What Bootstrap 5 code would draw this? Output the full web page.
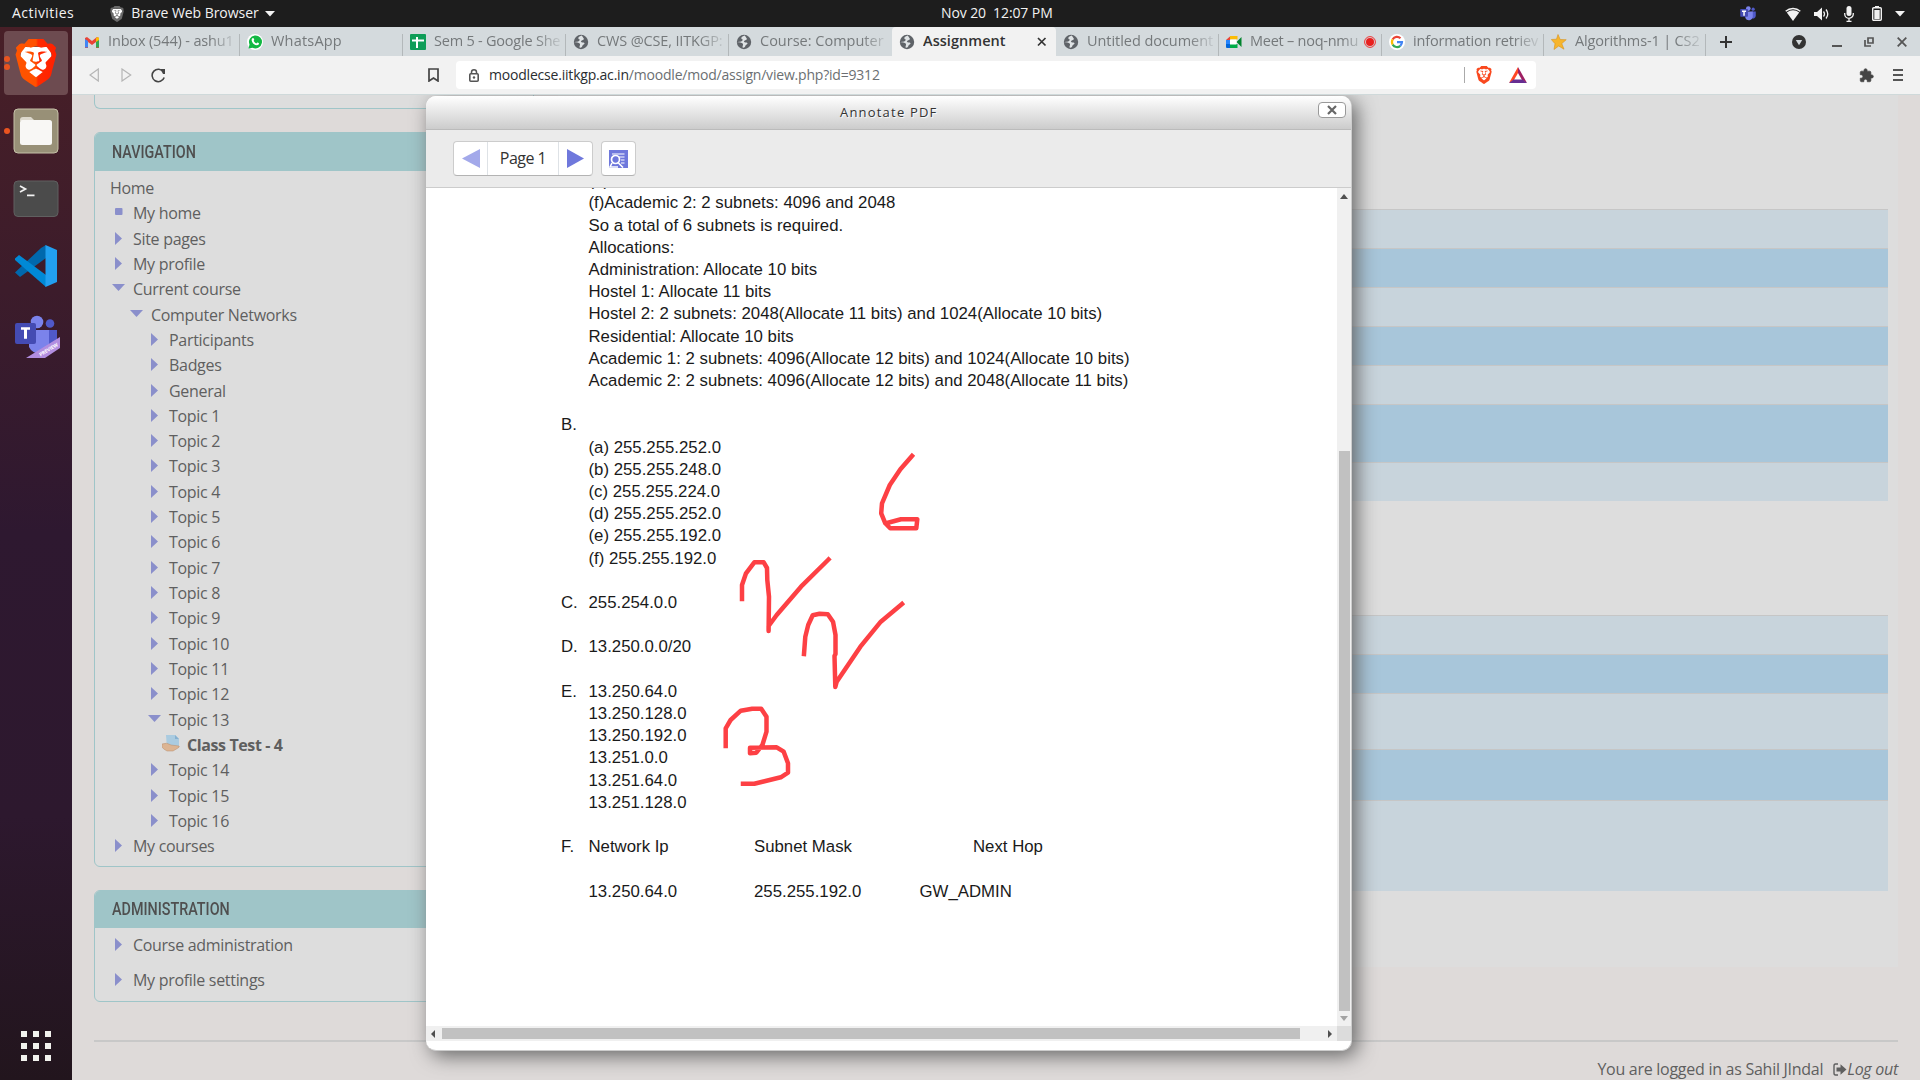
<!DOCTYPE html>
<html lang="en">
<head>
<meta charset="utf-8">
<title>Assignment</title>
<link rel="stylesheet" href="https://cdn.jsdelivr.net/npm/bootstrap@5.3.0/dist/css/bootstrap.min.css">
<style>
html,body{width:1920px;height:1080px;overflow:hidden}
body{font-family:"Open Sans","Noto Sans",sans-serif;font-size:16px;color:#5f5f5f;background:#dedad9;line-height:1.3}
svg{display:block;flex:none}
.sysbar{height:27px;flex:none;background:#1d1d1d;color:#f2f2f2;font-size:14px}
.sysbar-left{width:941px;padding-left:12px}
.dock{width:72px;flex:none;background:linear-gradient(#481f27 0,#3c1c2b 25%,#2e1830 48%,#2d182e 75%,#22151d 100%);position:relative}
.dock-active{width:64px;height:64px;flex:none;margin:4px 4px 0;border-radius:4px;background:#6d4b50}
.dots-pip{left:4px;width:6px;height:6px;border-radius:50%;background:#e95420}
.tabstrip{height:29px;flex:none;background:#d4dadd;font-size:14.5px;color:#75797b}
.btab{height:29px;width:163px;padding:0 5px 0 7px;position:relative;white-space:nowrap}
.btab::after{content:"";position:absolute;right:0;top:7px;bottom:0;width:1px;background:#b3b8ba}
.btab.on{background:#f2f2f2;color:#333;border-radius:4px 4px 0 0;font-weight:600}
.btab.on::after,.btab.bare::after{display:none}
.ttl{overflow:hidden;flex:1;margin-left:8px;letter-spacing:-.15px;-webkit-mask-image:linear-gradient(90deg,#000 80%,rgba(0,0,0,.15))}
.btab.full .ttl{-webkit-mask-image:none;letter-spacing:.05px}
.urlrow{height:39px;flex:none;background:#f2f2f2;border-bottom:1px solid #cfd9da}
.urlbox{width:1080px;height:28px;background:#fff;border-radius:4px;font-size:14px;letter-spacing:-.2px;color:#6b6f72}
.page{position:relative;overflow:hidden;background:#dedad9}
.cols{height:945px;padding:0 22px}
.side{width:440px}
.blk{border:1px solid #9fc5c8;border-radius:6px;background:#ddd;overflow:hidden}
.blk-h{background:#9fc5c8;color:#4f4f4f;font:500 17.5px/38px Roboto,sans-serif;padding-left:17px}
.blk-h span{display:inline-block;transform:scaleX(.82);transform-origin:0 50%}
.tree{list-style:none;margin:0;padding:5px 0 6px 15px;letter-spacing:-.3px}
.tree li{height:25.32px;line-height:25.32px;display:flex}
.ad.tree li{height:35px}
.ico{width:23px;flex:none;padding:5px 0 0 5px}
.ico-wide{width:30px}
.l1{padding-left:18px}.l2{padding-left:36px}.l3{padding-left:47px;letter-spacing:-.4px}
.mainp{width:1340px;height:872px;background:#ddd;padding:114px 10px 0}
.strip{border-top:1px solid #c6c6c6;background:#c8d4dc}
.strip.alt{background:#a8c6da}
.foot{padding:15px 22px 0;line-height:24px;letter-spacing:-.27px}
.rule{height:2px;background:#c8c8c8;margin:0 22px}
.dlg{position:absolute;left:354px;top:1px;width:926px;height:955px;background:#fff;border-radius:10px;border:solid #ccc;border-width:0 1px 1px 0;box-shadow:5px 5px 20px 0 #666;overflow:hidden}
.dlg-h{height:34px;padding-left:414px;background:linear-gradient(#fff,#ccc);border-bottom:1px solid #bbb;font-size:13px;letter-spacing:1.2px;color:#333;position:relative;text-shadow:1px 1px 1px #fff}
.dlg-x{position:absolute;right:5px;top:6px;width:28px;height:16px;border:1px solid #999;border-radius:4px;background:#fff}
.dlg-t{height:58px;background:#ebebeb;border-bottom:1px solid #ccc;padding:11px 0 0 27px}
.tbtn{height:35px;border:1px solid #ccc;border-bottom-color:#b3b3b3;border-radius:4px;background:#fff;color:#333;letter-spacing:-.5px}
.pdfv{position:relative;width:911px;height:838px;overflow:hidden;background:#fff}
.pdft{padding-left:135px;margin-top:-17.9px;font:16.8px/22.21px "Liberation Sans",Arial,sans-serif;color:#1a1a1a}
.pdft>div{height:22.21px;display:flex;white-space:pre}
.pdft b{font-weight:400;width:27.5px}
.pdft i{font-style:normal;width:165.5px}
.pdft i.wide{width:219px}
.ink{position:absolute;left:0;top:0}
.vsb{width:14px;background:#f0f0f0;height:838px}
.hsb{height:15px;background:#f0f0f0}
</style>
</head>
<body class="d-flex flex-column m-0">
<svg width="0" height="0" class="position-absolute">
<defs>
<symbol id="lion" viewBox="1.5 0 21 24"><path d="M5 4h14l1 6-5 9-3 2-3-2-5-9z" fill="var(--f,#fff)"/><path d="M15.68 0l2.096 2.38s1.84-.512 2.709.358c.868.87 1.584 1.638 1.584 1.638l-.562 1.381.715 2.047s-2.104 7.98-2.35 8.955c-.486 1.919-.818 2.66-2.198 3.633-1.38.972-3.884 2.66-4.293 2.916-.409.256-.92.692-1.38.692-.46 0-.97-.436-1.38-.692a185.796 185.796 0 01-4.293-2.916c-1.38-.973-1.712-1.714-2.197-3.633-.247-.975-2.351-8.955-2.351-8.955l.715-2.047-.562-1.381s.716-.768 1.585-1.638c.868-.87 2.708-.358 2.708-.358L8.321 0h7.36zm-3.679 14.936c-.14 0-1.038.317-1.758.69-.72.373-1.242.637-1.409.742-.167.104-.065.301.087.409.152.107 2.194 1.69 2.393 1.866.198.175.489.464.687.464.198 0 .49-.29.688-.464.198-.175 2.24-1.759 2.392-1.866.152-.108.254-.305.087-.41-.167-.104-.689-.368-1.41-.741-.72-.373-1.617-.69-1.757-.69zm0-11.278s-.409.001-1.022.206-1.278.46-1.584.46c-.307 0-2.581-.434-2.581-.434S4.119 7.152 4.119 7.849c0 .697.339.881.68 1.243l2.02 2.149c.192.203.59.511.356 1.066-.235.555-.58 1.26-.196 1.977.384.716 1.042 1.194 1.464 1.115.421-.08 1.412-.598 1.776-.834.364-.237 1.518-1.19 1.518-1.554 0-.365-1.193-1.02-1.413-1.168-.22-.15-1.226-.725-1.247-.95-.02-.227-.012-.293.284-.851.297-.559.831-1.304.742-1.8-.089-.495-.95-.753-1.565-.986-.615-.232-1.799-.671-1.947-.74-.148-.068-.11-.133.339-.175.448-.043 1.719-.212 2.292-.052.573.16 1.552.403 1.632.532.079.13.149.134.067.579-.081.445-.5 2.581-.541 2.96-.04.38-.12.63.288.724.409.094 1.097.256 1.333.256s.924-.162 1.333-.256c.408-.093.329-.344.288-.723-.04-.38-.46-2.516-.541-2.961-.082-.445-.012-.45.067-.579.08-.129 1.059-.372 1.632-.532.573-.16 1.845.009 2.292.052.449.042.487.107.339.175-.148.069-1.332.508-1.947.74-.615.233-1.476.49-1.565.986-.09.496.445 1.241.742 1.8.297.558.304.624.284.85-.02.226-1.026.802-1.247.95-.22.15-1.413.804-1.413 1.169 0 .364 1.154 1.317 1.518 1.554.364.236 1.355.755 1.776.834.422.079 1.08-.4 1.464-1.115.384-.716.039-1.422-.195-1.977-.235-.555.163-.863.355-1.066l2.02-2.149c.341-.362.68-.546.68-1.243 0-.697-2.695-3.96-2.695-3.96s-2.274.436-2.58.436c-.307 0-.972-.256-1.585-.461-.613-.205-1.022-.206-1.022-.206z" fill="var(--c)" fill-rule="evenodd"/></symbol>
<symbol id="globe" viewBox="0 0 16 16"><circle cx="8" cy="8" r="7.2" fill="#5f6368"/><path d="M8.8 1.5C6 2.200 4.600 3.600 5.600 4.900 7.200 5 7 6.800 5.200 7.400c-1.800.3-3 .2-3.900.9 1.900.6 4.600-.2 5.600 1.500.6 1.300-.6 2-.4 3.800 1.800.6 2.800-.9 3-2.100.4-1.100 1.900-1 2.100-2.300-1-1.300-3.300-.3-3.700-1.700.3-1.400 2.500-1 3.100-2.400C10.800 4.300 10 3.200 8.800 1.500z" fill="#dfe3e5"/></symbol>
<linearGradient id="bg" x1="0" x2="1"><stop offset="0" stop-color="#ff5500"/><stop offset=".5" stop-color="#ff5000"/><stop offset=".55" stop-color="#ff2a00"/><stop offset="1" stop-color="#ff2000"/></linearGradient>
<symbol id="teams" viewBox="0 0 45 43"><circle cx="22" cy="7" r="6.300" fill="#7b83eb"/><circle cx="35" cy="8.500" r="4.300" fill="#5059c9"/><path d="M31 15h11v12a7 7 0 01-11 5z" fill="#5059c9"/><path d="M14 15h20v14a10.500 10.500 0 01-20 3z" fill="#7b83eb"/><rect x="0" y="8" width="21" height="21" rx="2" fill="#444bb3"/></symbol>
</defs>
</svg>
<header class="sysbar d-flex align-items-center">
 <div class="sysbar-left d-flex align-items-center">
  <span style="letter-spacing:.45px">Activities</span>
  <svg width="14" height="16" style="--c:#6a6a6a;--f:#fff;margin-left:36px"><use href="#lion"/></svg>
  <span style="margin-left:7px;letter-spacing:-.05px">Brave Web Browser</span>
  <svg width="10" height="6" style="margin-left:6px"><path d="M0 0h10l-5 5.500z" fill="#f2f2f2"/></svg>
 </div>
 <span style="white-space:pre;letter-spacing:-.1px">Nov 20  12:07 PM</span>
 <div class="d-flex align-items-center ms-auto" style="margin-right:15px">
  <svg width="17" height="16" viewBox="0 0 45 43"><use href="#teams"/><path d="M5 12h11v4h-3.500v10h-4V16H5z" fill="#fff"/></svg>
  <svg width="16" height="14" style="margin-left:28px"><path d="M8 14L1.800 5.500a10 10 0 0112.400 0z" fill="#f2f2f2"/><path d="M.700 4.200a11 11 0 0114.600 0" fill="none" stroke="#f2f2f2" stroke-width="1.500"/></svg>
  <svg width="15" height="14" style="margin-left:13px"><path d="M0 5h3l5-4.500v13L3 9H0z" fill="#f2f2f2"/><path d="M9.500 4.500q2 2.500 0 5M12 2.500q3.500 4.500 0 9" fill="none" stroke="#f2f2f2" stroke-width="1.300"/></svg>
  <svg width="10" height="16" style="margin-left:15px"><rect x="2.500" y="0" width="5" height="10" rx="2.500" fill="#f2f2f2"/><path d="M.700 7v1a4.300 4.300 0 008.600 0V7M5 12v3M2.500 15.300h5" fill="none" stroke="#f2f2f2" stroke-width="1.300"/></svg>
  <svg width="10" height="15" style="margin-left:18px"><path d="M3 0h4v2H3z" fill="#f2f2f2"/><rect x=".700" y="1.700" width="8.600" height="12.600" rx="1" fill="none" stroke="#f2f2f2" stroke-width="1.400"/><path d="M2.300 4h5.400v9H2.300z" fill="#f2f2f2"/></svg>
  <svg width="10" height="6" style="margin-left:13px"><path d="M0 0h10l-5 5.500z" fill="#f2f2f2"/></svg>
 </div>
</header>
<div class="d-flex flex-grow-1" style="min-height:0">
 <aside class="dock d-flex flex-column align-items-center">
  <div class="dock-active d-flex justify-content-center align-items-center"><svg width="42" height="48" style="--c:url(#bg)"><use href="#lion"/></svg></div>
  <svg width="46" height="46" viewBox="0 0 46 46" style="margin-top:13px"><rect x="1" y="1" width="44" height="44" rx="4" fill="#989077" stroke="#c5c0a8"/><path d="M7 12q0-3 3-3h8l4 4H7z" fill="#dcd8cc"/><rect x="7" y="12" width="32" height="25" rx="2.500" fill="#f8f7f5"/></svg>
  <svg width="46" height="38" viewBox="0 0 46 38" style="margin-top:26px"><rect x="1" y="1" width="44" height="35.500" rx="4" fill="#4b4b4b" stroke="#606060"/><path d="M7 6l5.500 3L7 12M14 15.300h7.500" fill="none" stroke="#f2f2f2" stroke-width="1.700"/></svg>
  <svg width="42" height="42" viewBox="0 0 42 42" style="margin-top:27px"><path d="M31 0v13L5 32l-5-4.500L26 3z" fill="#0068ad"/><path d="M4 10L0 13.500V15l31 27V30z" fill="#0089d6"/><path d="M30.500 0L42 5v32l-11.500 5z" fill="#22a0f0"/></svg>
  <svg width="45" height="43" viewBox="0 0 45 43" style="margin:28px 0 0 2px"><use href="#teams"/><path d="M11 43L45 22v11L30 43z" fill="#b28ee0"/><path d="M6 12.300h9v2.500h-3v9H9v-9H6z" fill="#fff"/><text transform="translate(25.500 41.500) rotate(-31)" font-size="5" font-weight="700" fill="#fff" font-family="Open Sans,sans-serif" textLength="21">PREVIEW</text></svg>
  <svg width="30" height="30" viewBox="0 0 30 30" fill="#f2f2ee" style="margin-top:auto;margin-bottom:19px"><path d="M0 0h6v6H0zM12 0h6v6h-6zM24 0h6v6h-6zM0 12h6v6H0zM12 12h6v6h-6zM24 12h6v6h-6zM0 24h6v6H0zM12 24h6v6h-6zM24 24h6v6h-6z"/></svg>
  <span class="dots-pip position-absolute" style="top:29px"></span><span class="dots-pip position-absolute" style="top:37px"></span><span class="dots-pip position-absolute" style="top:101px"></span>
 </aside>
 <main class="d-flex flex-column flex-grow-1">
  <div class="tabstrip d-flex">
   <div class="btab d-flex align-items-center" style="width:168px;padding-left:12px"><svg width="16" height="12" viewBox="0 0 16 12"><path d="M1 2v10h3V6l4 3 4-3v6h3V2l-2-1-5 4-5-4z" fill="#ea4335"/><path d="M1 3v8.500h3V5z" fill="#4285f4"/><path d="M15 3v8.500h-3V5z" fill="#34a853"/><path d="M12 2l2-1 1 1v2l-3 2z" fill="#fbbc04"/></svg><span class="ttl">Inbox (544) - ashu1</span></div>
   <div class="btab d-flex align-items-center"><svg width="16" height="16" viewBox="0 0 16 16"><circle cx="8" cy="8" r="8" fill="#fff"/><path d="M1.500 14.500l1-4A6.500 6.500 0 115.500 13.700z" fill="#12b843"/><path d="M5.300 4.300q1-.800 1.500.3l.4 1q.1.500-.6 1.200Q7.600 8.900 9.400 9.500l.8-.9q1.200 0 1.900.9-.1 1.800-2.200 1.800Q5.500 10.600 4.600 6.300q0-1.300.7-2z" fill="#fff"/></svg><span class="ttl" style="letter-spacing:.2px">WhatsApp</span></div>
   <div class="btab d-flex align-items-center"><svg width="16" height="16"><rect width="16" height="16" rx="1" fill="#0f9d58"/><path d="M7 3v11M2 6.500h12" stroke="#fff" stroke-width="2"/></svg><span class="ttl" style="letter-spacing:-.22px">Sem 5 - Google She</span></div>
   <div class="btab d-flex align-items-center"><svg width="16" height="16"><use href="#globe"/></svg><span class="ttl">CWS @CSE, IITKGP:</span></div>
   <div class="btab bare d-flex align-items-center"><svg width="16" height="16"><use href="#globe"/></svg><span class="ttl" style="letter-spacing:0">Course: Computer</span></div>
   <div class="btab on full d-flex align-items-center" style="width:164px"><svg width="16" height="16"><use href="#globe"/></svg><span class="ttl">Assignment</span><svg width="10" height="10" class="me-1"><path d="M1 1l7.500 7.500M8.500 1L1 8.500" stroke="#333" stroke-width="1.700"/></svg></div>
   <div class="btab d-flex align-items-center"><svg width="16" height="16"><use href="#globe"/></svg><span class="ttl" style="letter-spacing:-.05px">Untitled document</span></div>
   <div class="btab d-flex align-items-center"><svg width="16" height="14" viewBox="0 0 16 14"><path d="M0 5l4.500-4v4z" fill="#ea4335"/><path d="M4 1h7.500v3.500H4z" fill="#fbbc04"/><path d="M0 5h4v5H0z" fill="#2684fc"/><path d="M0 9h4v4H1q-1 0-1-1z" fill="#0066da"/><path d="M4 9h7.500v4H4z" fill="#00ac47"/><path d="M10.500 7L15.500 2v10z" fill="#00832d"/><path d="M4 4.500h6.500V9.500H4z" fill="#fff"/></svg><span class="ttl" style="letter-spacing:-.25px">Meet – noq-nmu</span><svg width="12" height="12" style="margin-right:1px"><circle cx="6" cy="6" r="5.400" fill="none" stroke="#e33" stroke-width="1"/><circle cx="6" cy="6" r="4" fill="#e8201e"/></svg></div>
   <div class="btab d-flex align-items-center" style="width:162px"><svg width="16" height="16" viewBox="0 0 16 16"><circle cx="8" cy="8" r="8" fill="#fff"/><g fill="none" stroke-width="2.200"><path d="M11.500 4.300A5 5 0 003.700 5.400" stroke="#ea4335"/><path d="M3.700 5.400a5 5 0 000 5.200" stroke="#fbbc04"/><path d="M3.700 10.600a5 5 0 007.600 1.200" stroke="#34a853"/><path d="M11.300 11.800A5 5 0 0013 8.100H8" stroke="#4285f4"/></g></svg><span class="ttl">information retriev</span></div>
   <div class="btab d-flex align-items-center" style="width:162px"><svg width="16" height="16" viewBox="0 0 16 16"><path d="M7 .500l2.200 5 6 .2-4.400 3.900L13 15.200 7.700 12 3 15.500l1-5.800L.300 5.500l5.200-.3z" fill="#f7b52c" stroke="#d9921b" stroke-width=".600"/></svg><span class="ttl">Algorithms-1 | CS2</span></div>
   <div class="d-flex align-items-center" style="padding-left:14px"><svg width="12" height="12"><path d="M6 0v12M0 6h12" stroke="#333" stroke-width="2"/></svg></div>
   <div class="d-flex align-items-center ms-auto" style="margin-right:13px"><svg width="14" height="14"><circle cx="7" cy="7" r="7" fill="#333"/><path d="M3.800 5h6.400L7 10.200z" fill="#d4dadd"/></svg><svg width="10" height="10" style="margin-left:26px"><path d="M0 9h10" stroke="#555" stroke-width="2"/></svg><svg width="10" height="10" style="margin-left:22px"><path d="M4 1h5v5H4zM1 3v6h6" fill="none" stroke="#555" stroke-width="1.700"/></svg><svg width="10" height="10" style="margin-left:23px"><path d="M.700.700l8.600 8.600M9.300.700L.700 9.300" stroke="#555" stroke-width="1.800"/></svg></div>
  </div>
  <div class="urlrow d-flex align-items-center">
   <div class="d-flex align-items-center" style="width:384px;padding:0 17px"><svg width="10" height="14"><path d="M9.300 1v12L1 7z" fill="none" stroke="#b5b5b5" stroke-width="1.200"/></svg><svg width="11" height="14" style="margin-left:22px"><path d="M1 1v12l8.700-6z" fill="none" stroke="#b5b5b5" stroke-width="1.200"/></svg><svg width="15" height="15" style="margin-left:19px"><path d="M12.500 4A6.200 6.200 0 1013.200 9.500" fill="none" stroke="#444" stroke-width="1.600"/><path d="M9.500 1l4.500 0v5h-2z" fill="#444"/></svg><svg width="11" height="14" class="ms-auto"><path d="M1 1h9v12L5.500 10 1 13z" fill="none" stroke="#444" stroke-width="1.700"/></svg></div>
   <div class="urlbox d-flex align-items-center" style="padding-left:13px"><svg width="10" height="13"><path d="M2.500 5V3.300a2.500 2.500 0 015 0V5" fill="none" stroke="#555" stroke-width="1.500"/><rect x=".800" y="4.800" width="8.400" height="7.400" rx="1" fill="none" stroke="#555" stroke-width="1.600"/><circle cx="5" cy="8.500" r="1.200" fill="#555"/></svg><span style="margin-left:10px"><span style="color:#2a2d30">moodlecse.iitkgp.ac.in</span>/moodle/mod/assign/view.php?id=9312</span>
   <span class="ms-auto" style="width:1px;height:16px;background:#aaa"></span><svg width="16" height="18" style="--c:#f9481e;margin-left:11px"><use href="#lion"/></svg><svg width="18" height="16" style="margin:0 9px 0 17px"><path d="M9 0L0 16l5-3L9 6z" fill="#ff4724"/><path d="M9 0l9 16-5-3L9 6z" fill="#9e1f63"/><path d="M0 16l4.500-3.500h9L18 16z" fill="#662d91"/></svg></div>
   <div class="d-flex align-items-center ms-auto" style="margin-right:17px"><svg width="15" height="15" viewBox="0 0 24 24"><path d="M20.500 11H19V7c0-1.100-.9-2-2-2h-4V3.500a2.500 2.500 0 00-5 0V5H4c-1.100 0-2 .9-2 2v3.800h1.500a2.700 2.700 0 010 5.400H2V20c0 1.100.9 2 2 2h3.800v-1.500a2.700 2.700 0 015.400 0V22H17c1.100 0 2-.9 2-2v-4h1.500a2.500 2.500 0 000-5z" fill="#444" stroke="#444"/></svg><svg width="10" height="12" style="margin-left:19px"><path d="M0 1h10M0 6h10M0 11h10" stroke="#555" stroke-width="1.800"/></svg></div>
  </div>
  <div class="page flex-grow-1" style="min-height:0">
   <div class="cols d-flex justify-content-between">
    <div class="side">
     <div class="blk border-top-0 rounded-top-0" style="height:14px;margin-bottom:23px"></div>
     <div class="blk" style="height:735px;margin-bottom:23px"><div class="blk-h"><span>NAVIGATION</span></div><ul class="tree" id="nav"></ul></div>
     <div class="blk" style="height:112px"><div class="blk-h" style="line-height:37px"><span>ADMINISTRATION</span></div><ul class="tree ad"><li><span class="ico"><svg width="8" height="14"><path d="M0 0v13l7-6.500z" fill="#8a8fcb"/></svg></span><span>Course administration</span></li><li><span class="ico"><svg width="8" height="14"><path d="M0 0v13l7-6.500z" fill="#8a8fcb"/></svg></span><span>My profile settings</span></li></ul></div>
    </div>
    <div class="mainp">
     <div class="strip" style="height:39px"></div><div class="strip alt" style="height:39px"></div><div class="strip" style="height:39px"></div><div class="strip alt" style="height:39px"></div><div class="strip" style="height:39px"></div><div class="strip alt" style="height:58px"></div><div class="strip" style="height:39px"></div>
     <div style="height:114px"></div>
     <div class="strip" style="height:39px"></div><div class="strip alt" style="height:39px"></div><div class="strip" style="height:56px"></div><div class="strip alt" style="height:51px"></div><div class="strip" style="height:91px"></div>
    </div>
   </div>
   <div class="rule"></div>
   <footer class="foot d-flex justify-content-end align-items-center"><span>You are logged in as Sahil JIndal</span><svg width="14" height="13" style="margin-left:10px"><path d="M5 1H2.500Q1 1 1 3v7q0 2 1.500 2H5" fill="none" stroke="#5f5f5f" stroke-width="1.400"/><path d="M3.500 4.500h4V1.300L13.500 6.500l-6 5.200V8.500h-4z" fill="#5f5f5f"/></svg><i>Log out</i></footer>

   <section class="dlg" role="dialog">
    <div class="dlg-h d-flex align-items-center"><span>Annotate PDF</span><span class="dlg-x d-flex justify-content-center align-items-center"><svg width="10" height="10"><path d="M1 1l8 8M9 1L1 9" stroke="#666" stroke-width="2.200"/></svg></span></div>
    <div class="dlg-t d-flex align-items-start">
     <div class="tbtn d-flex align-items-stretch" style="width:140px"><span class="d-flex align-items-center justify-content-center" style="width:33px"><svg width="18" height="19"><path d="M18 0v19L0 9.500z" fill="#a3a9ea"/></svg></span><span class="d-flex align-items-center justify-content-center border-start border-end" style="width:72px">Page 1</span><span class="d-flex align-items-center justify-content-center flex-grow-1"><svg width="18" height="19"><path d="M0 0v19l17-9.500z" fill="#6f78dc"/></svg></span></div>
     <div class="tbtn d-flex align-items-center justify-content-center" style="width:35px;margin-left:8px"><svg width="19" height="18"><path d="M0 0h19v18H0z" fill="#6f78dc"/><path d="M3 4h12.500M10 7h5.500M12 10h3.500M12 13h3.500" stroke="#fff" stroke-width="1.200"/><circle cx="6.500" cy="9.500" r="4" fill="#6f78dc" stroke="#fff" stroke-width="1.700"/><path d="M9 12.500l5 5M3 13l-2 4h8" stroke="#fff" stroke-width="1.600" fill="none"/></svg></div>
    </div>
    <div class="d-flex">
     <div class="pdfv">
      <div class="pdft" id="pdf"></div>
      <svg class="ink" width="911" height="838" viewBox="426 188 911 838" fill="none" stroke="#fd4044" stroke-width="4.500" stroke-linejoin="round" stroke-linecap="square"><path d="M912 456L900.400 469.300 889.800 485 882 503.300 881.200 513.300 885.300 523.300 890.200 528.300H916.300L917.300 519.300H901L888 522.700M742 599V585L746 573.300 754.300 562.300H763.700L767 568 767.300 580 769 596.700 768.600 631V626L776.700 615 801 586.700 828.500 559.500M804 654L805.300 636.700 808.200 625 812.700 615.300 819.600 613.700 827.800 614.300 833 621.700 835.500 635V654L834.500 656 835.300 687 836.700 681.700 860.400 646.700 880.800 621.700 902 604M725.700 746V728.300L730.600 720 740.800 710.700 752.200 708.700H761.200L766.500 716.700V731.700L762.400 745 756.300 752.700 750 753.300V747.700L776.700 747.300 783.700 751.700 788 763.300V772.700L780.800 777.300 754.300 783.700H743"/></svg>
     </div>
     <div class="vsb d-flex flex-column align-items-center"><svg width="8" height="5" style="margin:6px 0"><path d="M0 5l4-5 4 5z" fill="#505050"/></svg><div style="width:11px;height:560px;background:#c1c1c1;margin-top:246px"></div><svg width="8" height="5" style="margin-top:5px"><path d="M0 0h8L4 5z" fill="#a3a3a3"/></svg></div>
    </div>
    <div class="hsb d-flex align-items-center"><svg width="4" height="8" style="margin:0 7px 0 5px"><path d="M4 0v8L0 4z" fill="#505050"/></svg><div style="width:858px;height:11px;background:#c1c1c1"></div><svg width="4" height="8" style="margin-left:28px"><path d="M0 0v8l4-4z" fill="#505050"/></svg><span class="ms-auto" style="width:14px;height:15px;background:#dcdcdc"></span></div>
   </section>
  </div>
 </main>
</div>
<script src="https://cdn.jsdelivr.net/npm/bootstrap@5.3.0/dist/js/bootstrap.bundle.min.js"></script>
<script>
// Navigation tree: label, depth, marker
const right='<svg width="8" height="14"><path d="M0 0v13l7-6.500z" fill="#8a8fcb"/></svg>';
const down='<svg width="14" height="8" style="margin:2px 0 0 -3px"><path d="M0 0h13l-6.500 7z" fill="#8a8fcb"/></svg>';
const dot='<svg width="8" height="9" style="margin-top:2px"><rect width="7.500" height="7" rx="1" fill="#8a8fcb"/></svg>';
const file='<svg width="18" height="18" style="margin-top:-4px"><path d="M4 1h9l4 4v9H5z" fill="#aacbe0"/><path d="M13 1v4h4z" fill="#86b0d0"/><path d="M0 10q5-2 9 1l8 1q1 1-1 2l-5 3H5q-4-2-5-4z" fill="#dcb492" stroke="#b98e6c" stroke-width=".500"/></svg>';
const rows=[['My home',0,dot],['Site pages',0,right],['My profile',0,right],['Current course',0,down],['Computer Networks',1,down],['Participants',2,right],['Badges',2,right],['General',2,right]];
for(let i=1;i<=16;i++){rows.push(['Topic '+i,2,i==13?down:right]);if(i==13)rows.push(['<b>Class Test - 4</b>',3,file]);}
rows.push(['My courses',0,right]);
document.getElementById('nav').innerHTML='<li>Home</li>'+rows.map(r=>`<li class="l${r[1]}"><span class="ico${r[1]==3?' ico-wide':''}">${r[2]}</span><span>${r[0]}</span></li>`).join('');
// Answer sheet: "label|text" per line
const L=['|(e)','|(f)Academic 2: 2 subnets: 4096 and 2048','|So a total of 6 subnets is required.','|Allocations:','|Administration: Allocate 10 bits','|Hostel 1: Allocate 11 bits','|Hostel 2: 2 subnets: 2048(Allocate 11 bits) and 1024(Allocate 10 bits)','|Residential: Allocate 10 bits','|Academic 1: 2 subnets: 4096(Allocate 12 bits) and 1024(Allocate 10 bits)','|Academic 2: 2 subnets: 4096(Allocate 12 bits) and 2048(Allocate 11 bits)','|','B.|','|(a) 255.255.252.0','|(b) 255.255.248.0','|(c) 255.255.224.0','|(d) 255.255.252.0','|(e) 255.255.192.0','|(f) 255.255.192.0','|','C.|255.254.0.0','|','D.|13.250.0.0/20','|','E.|13.250.64.0','|13.250.128.0','|13.250.192.0','|13.251.0.0','|13.251.64.0','|13.251.128.0','|'];
document.getElementById('pdf').innerHTML=L.map(s=>{const[a,b]=s.split('|');return `<div><b>${a}</b><span>${b}</span></div>`}).join('')+'<div><b>F.</b><i>Network Ip</i><i class="wide">Subnet Mask</i><span>Next Hop</span></div><div></div><div><b></b><i>13.250.64.0</i><i>255.255.192.0</i><span>GW_ADMIN</span></div>';
</script>
</body>
</html>
